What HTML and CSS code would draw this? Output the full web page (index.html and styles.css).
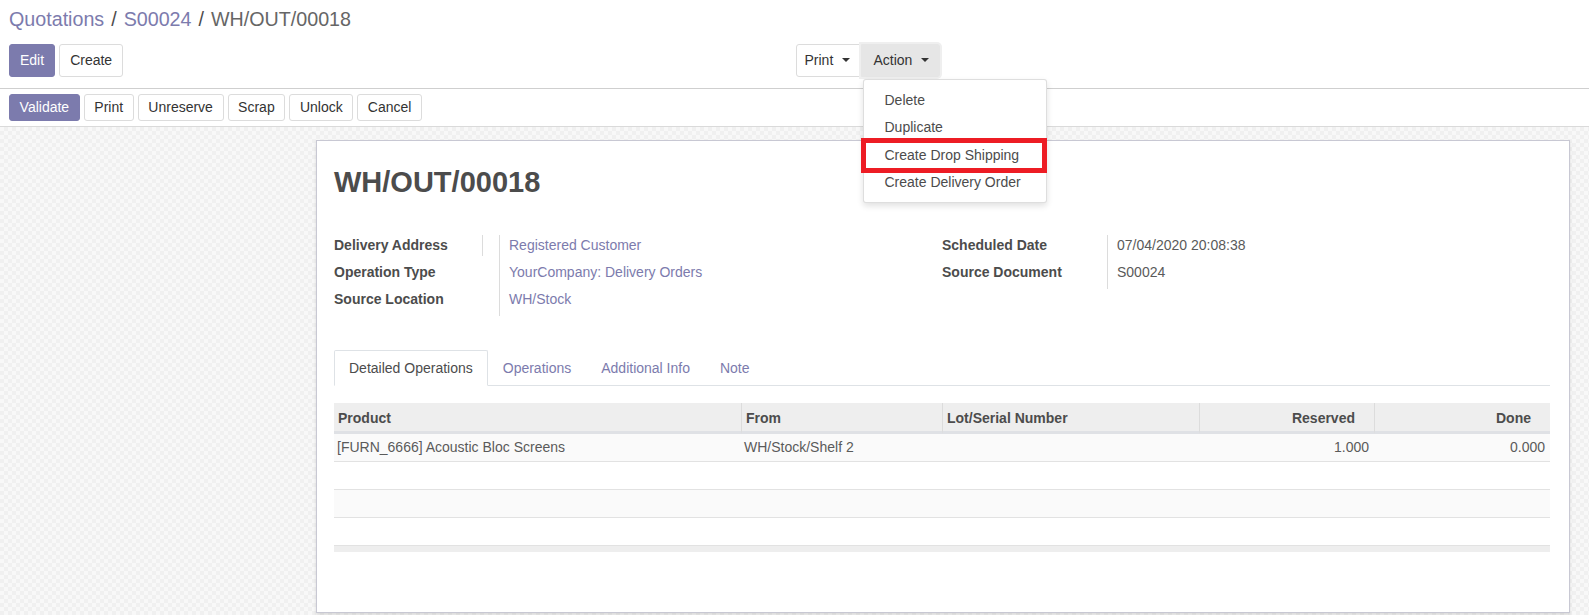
FILE: index.html
```html
<!DOCTYPE html>
<html lang="en">
<head>
<meta charset="utf-8">
<title>WH/OUT/00018</title>
<link rel="stylesheet" href="styles.css">
</head>
<body>
<div class="app">
  <div class="control-panel">
    <div class="breadcrumb">
      <a class="crumb-link">Quotations</a><span class="sep"> / </span><a class="crumb-link">S00024</a><span class="sep"> / </span><span class="crumb-active">WH/OUT/00018</span>
    </div>
    <div class="cp-bottom">
      <div class="cp-left">
        <button class="btn btn-primary btn-md">Edit</button>
        <button class="btn btn-secondary btn-md">Create</button>
      </div>
      <div class="cp-right">
        <div class="btn-group">
          <button class="btn btn-secondary btn-md btn-print">Print<span class="caret"></span></button>
          <button class="btn btn-md btn-action">Action<span class="caret"></span></button>
          <div class="dropdown-menu">
            <a class="dropdown-item">Delete</a>
            <a class="dropdown-item">Duplicate</a>
            <a class="dropdown-item">Create Drop Shipping</a>
            <a class="dropdown-item">Create Delivery Order</a>
            <div class="highlight-box"></div>
          </div>
        </div>
      </div>
    </div>
  </div>

  <div class="statusbar">
    <button class="btn btn-primary btn-sm">Validate</button>
    <button class="btn btn-secondary btn-sm">Print</button>
    <button class="btn btn-secondary btn-sm">Unreserve</button>
    <button class="btn btn-secondary btn-sm">Scrap</button>
    <button class="btn btn-secondary btn-sm">Unlock</button>
    <button class="btn btn-secondary btn-sm">Cancel</button>
  </div>

  <div class="sheet-bg">
    <div class="sheet">
      <h1 class="title">WH/OUT/00018</h1>

      <div class="groups">
        <div class="group">
          <div class="labels">
            <div class="lbl first">Delivery Address</div>
            <div class="lbl">Operation Type</div>
            <div class="lbl">Source Location</div>
          </div>
          <div class="values">
            <div class="val"><a class="link">Registered Customer</a></div>
            <div class="val"><a class="link">YourCompany: Delivery Orders</a></div>
            <div class="val"><a class="link">WH/Stock</a></div>
          </div>
        </div>
        <div class="group">
          <div class="labels">
            <div class="lbl">Scheduled Date</div>
            <div class="lbl">Source Document</div>
          </div>
          <div class="values">
            <div class="val">07/04/2020 20:08:38</div>
            <div class="val">S00024</div>
          </div>
        </div>
      </div>

      <ul class="tabs">
        <li class="tab active"><a>Detailed Operations</a></li>
        <li class="tab"><a>Operations</a></li>
        <li class="tab"><a>Additional Info</a></li>
        <li class="tab"><a>Note</a></li>
      </ul>

      <table class="lines">
        <colgroup>
          <col class="c-product">
          <col class="c-from">
          <col class="c-lot">
          <col class="c-reserved">
          <col class="c-done">
        </colgroup>
        <thead>
          <tr>
            <th>Product</th>
            <th>From</th>
            <th>Lot/Serial Number</th>
            <th class="num">Reserved</th>
            <th class="num">Done</th>
          </tr>
        </thead>
        <tbody>
          <tr>
            <td>[FURN_6666] Acoustic Bloc Screens</td>
            <td>WH/Stock/Shelf 2</td>
            <td></td>
            <td class="num">1.000</td>
            <td class="num">0.000</td>
          </tr>
          <tr><td>&nbsp;</td><td></td><td></td><td></td><td></td></tr>
          <tr><td>&nbsp;</td><td></td><td></td><td></td><td></td></tr>
          <tr><td>&nbsp;</td><td></td><td></td><td></td><td></td></tr>
        </tbody>
        <tfoot>
          <tr><td></td><td></td><td></td><td></td><td></td></tr>
        </tfoot>
      </table>
    </div>
  </div>
</div>
</body>
</html>
```

FILE: styles.css
```css
* { box-sizing: border-box; }

html, body {
  margin: 0;
  padding: 0;
}

body {
  width: 1589px;
  height: 615px;
  overflow: hidden;
  font-family: "Liberation Sans", Arial, sans-serif;
  font-size: 14px;
  color: #4c4c4c;
  background: #fff;
}

a { cursor: pointer; }

/* ---------- control panel ---------- */
.control-panel {
  background: #fff;
  border-bottom: 1px solid #cfcfcf;
  padding: 5px 9px 11px 9px;
}

.breadcrumb {
  font-size: 19.7px;
  line-height: 29px;
  height: 29px;
  white-space: nowrap;
}

.crumb-link { color: #7c7bad; }
.sep { color: #4c4c4c; padding: 0 1.5px; }
.crumb-active { color: #666; }

.cp-bottom {
  margin-top: 10px;
  display: grid;
  grid-template-columns: 1fr 1fr;
}

.cp-left {
  display: flex;
  gap: 4px;
}

.cp-right {
  padding-left: 1px;
}

/* ---------- buttons ---------- */
.btn {
  font-family: inherit;
  font-size: 14px;
  border: 1px solid #dcdcdc;
  border-radius: 3px;
  background: #fff;
  color: #333;
  padding: 0 10px;
  margin: 0;
  cursor: pointer;
  white-space: nowrap;
}

.btn-md {
  height: 33px;
  line-height: 31px;
}

.btn-sm {
  height: 27px;
  line-height: 25px;
  font-size: 14px;
  padding: 0 9.6px;
}

.btn-primary {
  background: #7c7bad;
  border-color: #7c7bad;
  color: #fff;
}

.btn-group {
  position: relative;
  display: inline-flex;
}

.btn-print {
  border-radius: 3px 0 0 3px;
  padding: 0 8px;
  width: 64px;
  text-align: left;
}

.btn-action {
  background: #e6e6e6;
  border-color: #e6e6e6;
  border-radius: 0 3px 3px 0;
  padding: 0 12px;
  width: 79px;
  margin-left: 1px;
  text-align: left;
  color: #333;
  box-shadow: 0 0 0 2px #efefef;
}

.caret {
  display: inline-block;
  width: 0;
  height: 0;
  margin-left: 9px;
  vertical-align: 3px;
  border-top: 4px solid #333;
  border-left: 4px solid transparent;
  border-right: 4px solid transparent;
}

/* ---------- dropdown ---------- */
.dropdown-menu {
  position: absolute;
  top: 35px;
  left: 67px;
  width: 184px;
  background: #fff;
  border: 1px solid rgba(0, 0, 0, 0.13);
  border-radius: 3px;
  box-shadow: 0 3px 6px rgba(0, 0, 0, 0.12);
  padding: 7px 0 6px;
  z-index: 10;
}

.dropdown-item {
  display: block;
  padding: 3px 21px;
  line-height: 21.3px;
  color: #4c4c4c;
  white-space: nowrap;
}

.highlight-box {
  position: absolute;
  left: -3px;
  top: 58px;
  width: 186px;
  height: 35px;
  border: 5px solid #ed1c24;
}

/* ---------- statusbar ---------- */
.statusbar {
  background: #fff;
  border-bottom: 1px solid #dadada;
  padding: 5px 9px;
  display: flex;
  gap: 4px;
}

/* ---------- sheet ---------- */
.sheet-bg {
  height: 488px;
  padding: 13px 0 0 316px;
  background-color: #f8f8f8;
  background-image: conic-gradient(#f0f0f0 25%, transparent 0 50%, #f0f0f0 0 75%, transparent 0);
  background-size: 8px 8px;
}

.sheet {
  width: 1254px;
  height: 473px;
  background: #fff;
  border: 1px solid #c8c8d3;
  box-shadow: 0 2px 3px rgba(0, 0, 0, 0.12);
  padding: 24px 19px 0 17px;
}

.title {
  margin: 0;
  font-size: 29px;
  line-height: 34px;
  font-weight: bold;
  color: #4c4c4c;
}

.groups {
  margin-top: 36px;
  display: grid;
  grid-template-columns: 608px 608px;
}

.group {
  display: flex;
  align-items: flex-start;
}

.labels {
  width: 165px;
  flex: none;
}

.lbl {
  font-weight: bold;
  line-height: 21px;
  margin-bottom: 6px;
  color: #4c4c4c;
  white-space: nowrap;
}

.lbl.first {
  width: 149px;
  border-right: 1px solid #dcdcdc;
}

.values {
  border-left: 1px solid #dcdcdc;
  padding-left: 9px;
}

.val {
  line-height: 21px;
  margin-bottom: 6px;
  color: #5a5a5a;
  white-space: nowrap;
}

.link { color: #7c7bad; }

/* ---------- tabs ---------- */
.tabs {
  list-style: none;
  margin: 34px 0 0;
  padding: 0;
  display: flex;
  border-bottom: 1px solid #dee2e6;
}

.tab {
  margin-bottom: -1px;
}

.tab a {
  display: block;
  padding: 7px 14px;
  line-height: 20px;
  border: 1px solid transparent;
  border-radius: 2px 2px 0 0;
  color: #7c7bad;
}

.tab.active a {
  color: #4c4c4c;
  background: #fff;
  border-color: #dee2e6 #dee2e6 #fff;
}

/* ---------- table ---------- */
.lines {
  margin-top: 17px;
  width: 1216px;
  table-layout: fixed;
  border-collapse: separate;
  border-spacing: 0;
}

.c-product { width: 407px; }
.c-from { width: 201px; }
.c-lot { width: 257px; }
.c-reserved { width: 175px; }
.c-done { width: 176px; }

.lines th {
  background: #eeeeee;
  font-weight: bold;
  text-align: left;
  line-height: 20px;
  padding: 5px 4px 3px;
  border-bottom: 3px solid #dfe1e5;
  border-left: 1px solid #dcdcdc;
  color: #4c4c4c;
  white-space: nowrap;
}

.lines th:first-child { border-left: none; }

.lines th.num {
  text-align: right;
  padding-right: 19px;
}

.lines td {
  line-height: 20px;
  padding: 3px 3px 4px;
  border-bottom: 1px solid #e2e2e2;
  color: #5a5a5a;
  white-space: nowrap;
  overflow: hidden;
}

.lines td.num {
  text-align: right;
  padding-right: 5px;
}

.lines tbody tr:nth-child(odd) td { background: #fafafa; }
.lines tbody tr:nth-child(even) td { background: #fff; }

.lines tfoot td {
  height: 6px;
  padding: 0;
  line-height: 0;
  background: #eeeeee;
  border-bottom: none;
}
```
